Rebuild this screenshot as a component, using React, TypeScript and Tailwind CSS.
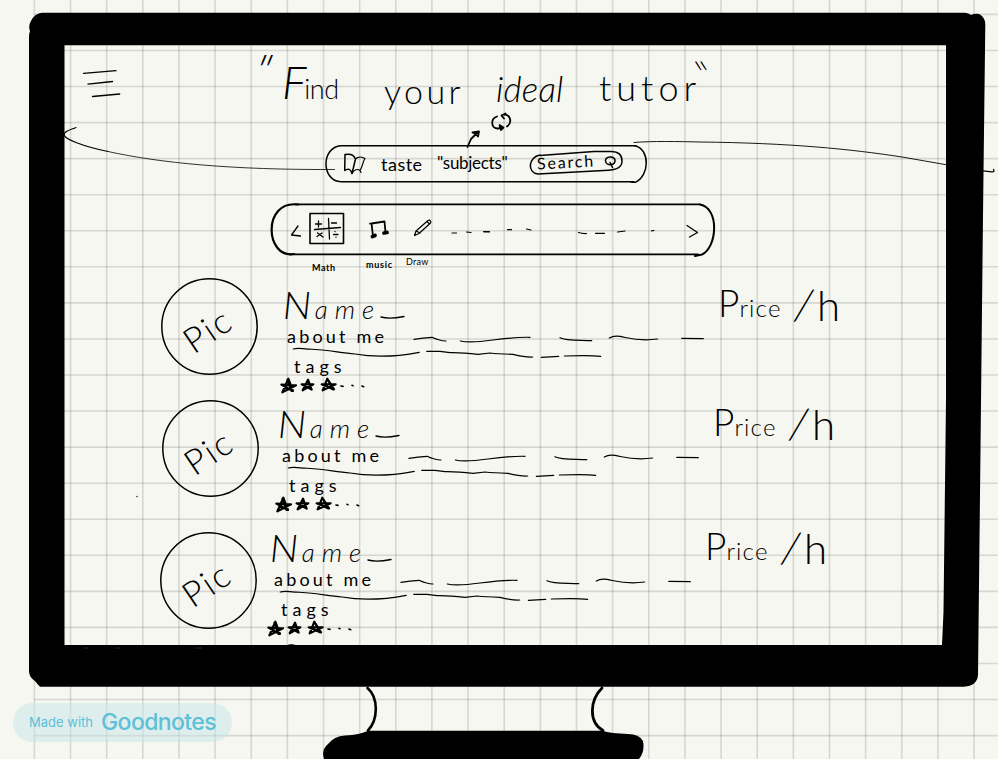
import React from "react";

const ink = {
  fill: "none",
  stroke: "#000",
  strokeLinecap: "round" as const,
  strokeLinejoin: "round" as const,
};

const columns = Array.from({ length: 27 }, (_, i) => 34.4 + i * 36.14);
const rows = Array.from({ length: 21 }, (_, i) => 14.4 + i * 36.06);

function Paper() {
  return (
    <svg className="absolute inset-0" width="998" height="759" viewBox="0 0 998 759">
      <g stroke="#000" strokeOpacity="0.13" strokeWidth="1.6">
        {columns.map((x) => (
          <line key={x} x1={x} x2={x} y1="0" y2="759" />
        ))}
        {rows.map((y) => (
          <line key={y} x1="34" x2="998" y1={y} y2={y} />
        ))}
      </g>
    </svg>
  );
}

function Monitor() {
  return (
    <svg className="absolute inset-0" width="998" height="759" viewBox="0 0 998 759">
      <path
        fillRule="evenodd"
        d="M42 12.7H965Q969 13 971 15Q975 13 979 14Q985 17 985.3 24L983 215L980.5 450L978 675Q977 686 964 686.7H40Q38 685 35 681Q29 677 29 671V38Q29 33 30 31Q28 26 31 21Q35 13 42 12.7ZM64.5 45.3V645H942L943.5 612L946 400V45.3Z"
      />
      <path d="M324 759Q321 750 328 744Q334 736 345 735.5Q360 735 368 730.8H602Q611 733.5 628 734Q639 734 643 741Q645 752 639 759Z" />
      <g {...ink} strokeWidth="2.6">
        <path d="M367.5 688C379 698 378 720 368 730.5" />
        <path d="M602 688C590 700 588 722 603 730.5" strokeWidth="2.8" />
      </g>
      <g {...ink}>
        <path d="M76 127.5C70 130 64 131 64 135C65 139 82 146 108 151.5" strokeWidth="1.2" />
        <path d="M108 151.5C160 163 232 170 334.5 169.5" strokeWidth="0.8" />
        <path d="M634 142.5C650 141 680 141.5 700 142C790 143 850 149 902 157Q925 161 946 164.7" strokeWidth="0.9" />
        <path d="M983 170.8L992 171.8Q995 172 993.5 169.5" strokeWidth="1.3" />
        <path d="M288 645.2Q291 643.8 295 645.2" strokeWidth="1" />
      </g>
      <circle cx="137" cy="496.500" r="0.7" />
      <g stroke="#333" strokeWidth="0.8">
        <path d="M84 648H88M115 648H120M195 648H202" />
      </g>
    </svg>
  );
}

function MenuIcon() {
  return (
    <svg className="ml-[82px] mt-[22px] shrink-0" width="40" height="32" viewBox="82 68 40 32">
      <g {...ink} strokeWidth="1.3">
        <path d="M83.500 73.300L116 70.700M88 84.200L112.500 81.500M92.500 96.500L119.700 94" />
      </g>
    </svg>
  );
}

function Header() {
  return (
    <header className="relative flex h-[98px] items-start">
      <MenuIcon />
      <h1 className="ml-[138px] flex font-light leading-none">
        <span className="mt-[1px] h-[22px] w-[22px] -skew-x-[22deg] text-[44px] leading-[44px]">"</span>
        <span className="mt-[14px] w-[102px] whitespace-nowrap">
          <span className="inline-block text-[46px] italic leading-[44px] tracking-[-2px]">F</span>
          <span className="text-[27px] tracking-[-0.5px]">ind</span>
        </span>
        <span className="mt-[28px] w-[112px] text-[34px] tracking-[3.4px]">your</span>
        <span className="mt-[25px] w-[103px] text-[35px] italic tracking-[0.2px]">ideal</span>
        <span className="mt-[23px] w-[94px] text-[36px] tracking-[5px]">tutor</span>
        <span className="mt-[9px] h-[16px] skew-x-[32deg] text-[36px] leading-[36px]">"</span>
      </h1>
      <svg className="absolute left-[462px] top-[62px]" width="54" height="42" viewBox="462 108 54 42">
        <g {...ink} strokeWidth="1.8">
          <path d="M467.500 147L471 139L477 133M472.500 132.500L479 131.500L478 136.500L475 133Z" />
          <path d="M497 116.500C490 119 491 129 498 128.500L503 127.500M499.500 125L503.500 127.500L501 130Z" />
          <path d="M502 115C510 113 513 122 507 126.500M505.500 113.500L501.500 115.500L504 118.500" />
        </g>
      </svg>
    </header>
  );
}

function BookIcon() {
  return (
    <svg width="24" height="24" viewBox="343 152 24 24">
      <g {...ink} strokeWidth="1.5">
        <path d="M345 154.500L344.700 170.500C348 168 351 169 352 173.500L355.500 159C354 155 350 153.500 345 154.500Z" />
        <path d="M355.500 159C358 156.500 362 156.500 365 158.500C362.500 162 363 166 360 170.500C357.500 168.500 354 169.500 352 173.500M360 170.500L361 172.500" strokeWidth="1.2" />
      </g>
    </svg>
  );
}

function SearchBar() {
  return (
    <div className="relative ml-[324px] flex h-[39px] w-[324px]">
      <svg className="absolute inset-0" width="324" height="39" viewBox="324 144 324 39">
        <g {...ink} strokeWidth="1.5">
          <path d="M636 145.700H341C321 147 321 181 341 181.700H634" />
          <path d="M635 145.700C650 149 650 176 635 182.500L631 183" />
        </g>
      </svg>
      <div className="relative ml-[19px] mt-[8px] w-[38px]">
        <BookIcon />
      </div>
      <span className="relative mt-[10px] w-[56px] text-[18px] leading-[20px] tracking-[0.5px]">taste</span>
      <span className="relative mt-[9px] w-[92px] text-[17px] leading-[20px] tracking-[-0.3px]">"subjects"</span>
      <button className="relative mt-[6px] flex h-[25px] w-[95px] items-start">
        <svg className="absolute inset-0" width="95" height="25" viewBox="529 150 95 25">
          <g {...ink} strokeWidth="1.5">
            <path d="M540 155C528 157 527 173 538 174L604 170.500C618 170 622 167 622 161C622 154 618 151.500 611 151.500H594L540 155.500" />
            <path d="M605.500 161C605 156 614 155.500 615 160C616 166 606 166 605.500 161ZM610 162.500L612.500 167.500" />
          </g>
        </svg>
        <span className="relative ml-[8px] mt-[2px] -rotate-3 text-[16px] leading-[20px] tracking-[1.8px]">Search</span>
      </button>
    </div>
  );
}

function CategoryBar() {
  return (
    <nav className="mt-[20px] flex flex-col">
      <svg className="ml-[269px]" width="448" height="54" viewBox="269 203 448 54">
        <g {...ink}>
          <path d="M700 204.300H295M290 254.400H698" strokeWidth="1.7" />
          <path d="M298 204.500C262 200 265 259 294 254" strokeWidth="2.2" />
          <path d="M700 204.500C720 208 717 248 702 254.500L695 256" strokeWidth="2" />
          <path d="M298 226L291.500 235L300.500 236M687 225.500L697.500 232.500L689.500 237" strokeWidth="1.3" />
          <path d="M310 213.500H343.500V243.500H310Z" strokeWidth="1.6" />
          <path d="M314.500 229.500L340.500 227.500M328.500 218.500L329.500 239M315.500 224H321.500M318.500 221V227M331.500 223H336.500M317.500 233L323 237M322 233L317 236.500M333.500 234.500H338M335 231.500V231.600M336 237.200V237.300" strokeWidth="1.3" />
          <path d="M373 236L371.500 223.500L384.500 221.500L385.500 232.500M370 223.700L372 223.400" strokeWidth="1.8" />
          <path d="M372.500 236.500L375 235.500M384 233L387 232.500" strokeWidth="3.8" />
          <path d="M414.500 235.500L416 231L428 220.500C430 219.500 431.500 221.500 430.500 223L419 233.500ZM417 231.500L420 233M427 221.500L429.500 224" strokeWidth="1.2" />
          <path d="M452 233H456.500M466.500 232L471 232.500M484 232L489.500 232M483.500 231.500H489.500M507.500 229.700H511.500M526.500 229L531 230" strokeWidth="1.2" />
          <path d="M578.500 232.500Q582 233.700 586.500 233.500M595.500 233.300H604.500M617.500 232L625 231M651.500 230.800L654 230.500" strokeWidth="1.2" />
        </g>
      </svg>
      <div className="flex h-[28px] items-start pl-[312px] text-[9px] font-bold leading-[9px]">
        <span className="mt-[6px] w-[54px] tracking-[0.6px]">Math</span>
        <span className="mt-[3px] w-[40px] tracking-[0.7px]">music</span>
        <span className="font-normal tracking-[0.3px]">Draw</span>
      </div>
    </nav>
  );
}

function Avatar({ className }: { className: string }) {
  return (
    <div className={`grid size-[97px] shrink-0 place-items-center ${className}`}>
      <svg className="col-start-1 row-start-1" width="97" height="97" viewBox="0 0 97 97">
        <circle cx="48.500" cy="48.500" r="47.700" {...ink} strokeWidth="1.5" />
      </svg>
      <span className="relative right-[2px] top-[3px] col-start-1 row-start-1 -rotate-[34deg] text-[35px] font-light leading-none tracking-[2px]">
        Pic
      </span>
    </div>
  );
}

function AboutLine() {
  return (
    <svg width="300" height="22" viewBox="410 323 300 22">
      <g {...ink} strokeWidth="1.2">
        <path d="M414 339.300Q423 338 432 337.300Q440 341 446 341M460.300 341C478 345 500 336.500 530 337.300M560 337.700C566 341 580 340 591.700 340.700M609.300 338C620 332 628 343 657.700 339M681.700 338.300L703.300 338.700" />
      </g>
    </svg>
  );
}

function SecondLine() {
  return (
    <svg className="ml-[10px]" width="314" height="14" viewBox="290 346 314 14">
      <g {...ink} strokeWidth="1.2">
        <path d="M293.300 350C300 348 303 350.500 309 350C330 351 340 354 355 355C375 358.500 400 357 419.300 353.300M426.700 352.300H440L450 353.700Q462 353.500 478 355.300L490 354Q498 355 513 355.300Q526 358.500 532.700 358M541.300 358.300L558.700 357.300M564.300 357Q590 356 600.700 357.300" />
      </g>
    </svg>
  );
}

function Stars() {
  return (
    <svg className="-ml-px" width="88" height="18" viewBox="387 320 264 54">
      <g {...ink} strokeWidth="6.500">
        <path d="M397 366L415 325L429 362L394 343L438 345L397 366M412 329L425 362" />
        <path d="M458 360L474 328L485 358L455 342L490 342L458 360" />
        <path d="M518 360L532 325L549 357L515 342L557 342L518 360M535 330L552 357" />
        <path d="M573 347L579 348M606 345L609 346M636 347L641 349" strokeWidth="5" />
      </g>
    </svg>
  );
}

function Price() {
  return (
    <div className="flex w-[128px] shrink-0 items-start whitespace-nowrap font-light leading-none">
      <span className="w-[77px]">
        <span className="text-[37px] leading-[36px]">P</span>
        <span className="text-[24px] tracking-[1.2px]">rice</span>
      </span>
      <span className="flex items-start text-[42px] leading-[42px]">
        <span className="mt-[-2px] w-[22px] skew-x-[-10deg]">/</span>
        <span className="mt-[-1px] text-[42px]">h</span>
      </span>
    </div>
  );
}

function Name() {
  return (
    <div className="flex h-[38px] items-start">
      <h2 className="w-[113px] shrink-0 whitespace-nowrap pl-[3px] font-light leading-[38px]">
        <span className="inline-block -skew-x-6 text-[38px] tracking-[3px]">N</span>
        <span className="text-[26px] italic tracking-[7px]">ame</span>
      </h2>
      <svg className="-ml-[13px] mt-[28px]" width="26" height="8" viewBox="0 0 26 8">
        <path d="M1 4Q9 6.500 24 3.500" {...ink} strokeWidth="1.4" />
      </svg>
    </div>
  );
}

function TutorRow({ rowClass, avatarClass, infoClass }: { rowClass: string; avatarClass: string; infoClass: string }) {
  return (
    <article className={`flex shrink-0 items-start ${rowClass}`}>
      <Avatar className={avatarClass} />
      <div className={`flex w-[438px] shrink-0 flex-col ${infoClass}`}>
        <Name />
        <div className="flex h-[22px]">
          <p className="w-[130px] whitespace-nowrap pl-[7px] pt-[3px] text-[18px] leading-[20px] tracking-[3.2px]">about me</p>
          <AboutLine />
        </div>
        <SecondLine />
        <p className="h-[18px] pl-[14px] text-[18px] leading-[14px] tracking-[5px]">tags</p>
        <Stars />
      </div>
      <Price />
    </article>
  );
}

function Badge() {
  return (
    <footer className="absolute left-[13px] top-[703px] flex h-[39px] w-[219px] items-center rounded-full bg-[#c5e6e8]/50 pl-[16px] font-['Inter',sans-serif] text-[#5cc0d9]">
      <span className="w-[72px] whitespace-nowrap text-[13px]">Made with</span>
      <span className="text-[23px] font-medium tracking-[-0.6px]">Goodnotes</span>
    </footer>
  );
}

export default function App() {
  return (
    <div className="relative h-[759px] w-[998px] overflow-hidden bg-[#f6f7f1] font-['Lato',sans-serif] text-black">
      <Paper />
      <Monitor />
      <main className="relative flex h-[646px] flex-col overflow-hidden pt-[46px]">
        <Header />
        <SearchBar />
        <CategoryBar />
        <section className="flex flex-col">
          <TutorRow rowClass="h-[119px] pl-[161px]" avatarClass="mt-[-7px]" infoClass="ml-[22px]" />
          <TutorRow rowClass="h-[124px] pl-[162px]" avatarClass="mt-[-4px]" infoClass="ml-[16px]" />
          <TutorRow rowClass="h-[118px] pl-[160px]" avatarClass="mt-[4px]" infoClass="ml-[10px]" />
        </section>
      </main>
      <Badge />
    </div>
  );
}
